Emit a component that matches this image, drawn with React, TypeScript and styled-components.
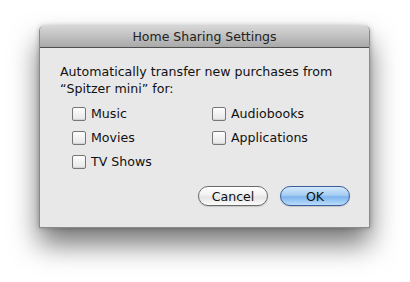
import React from "react";
import styled, { createGlobalStyle } from "styled-components";

const Global = createGlobalStyle`
  html, body { margin: 0; padding: 0; background: #ffffff; }
  body { font-family: "DejaVu Sans", "Noto Sans", sans-serif; }
`;

const Page = styled.div`
  width: 410px;
  height: 282px;
  padding: 26px 0 0 39px;
  box-sizing: border-box;
  background: #fff;
`;

const Window = styled.div`
  width: 331px;
  height: 202px;
  background: #e8e8e8;
  border: 1px solid #8a8a8a;
  border-top: none;
  box-sizing: border-box;
  border-radius: 5px 5px 0 0;
  box-shadow: 0 16px 28px rgba(0, 0, 0, 0.55), 0 0 5px rgba(0, 0, 0, 0.25);
  display: flex;
  flex-direction: column;
`;

const TitleBar = styled.div`
  height: 21px;
  border-radius: 5px 5px 0 0;
  background: linear-gradient(#d6d6d6, #a9a9a9);
  border-bottom: 1px solid #4e4e4e;
  display: flex;
  align-items: center;
  justify-content: center;
  font-size: 12.5px;
  color: #222;
`;

const Body = styled.div`
  flex: 1;
  padding: 15px 19px 0 20px;
  display: flex;
  flex-direction: column;
`;

const Prompt = styled.div`
  font-size: 12.6px;
  line-height: 17px;
  color: #111;
`;

const Grid = styled.div`
  display: grid;
  grid-template-columns: 140px 140px;
  row-gap: 9px;
  margin: 9px 0 0 12px;
`;

const Option = styled.label`
  display: flex;
  align-items: center;
  gap: 5px;
  font-size: 12.6px;
  height: 15px;
  color: #111;
`;

const Box = styled.span`
  width: 12px;
  height: 12px;
  border: 1px solid #777;
  border-radius: 2px;
  background: linear-gradient(#fdfdfd, #e6e6e6);
  box-shadow: inset 0 -1px 1px rgba(0,0,0,0.08);
  flex: none;
`;

const Buttons = styled.div`
  display: flex;
  justify-content: flex-end;
  gap: 12px;
  margin-top: 17px;
`;

const Button = styled.div<{ $primary?: boolean }>`
  width: 70px;
  height: 20px;
  box-sizing: border-box;
  border-radius: 10px;
  display: flex;
  align-items: center;
  justify-content: center;
  font-size: 12.6px;
  color: #111;
  border: 1px solid ${(p) => (p.$primary ? "#3b5d99" : "#6a6a6a")};
  box-shadow: 0 1px 1px rgba(0,0,0,0.15);
  background: ${(p) =>
    p.$primary
      ? "linear-gradient(#d4e8fb 0%, #a6cdf3 45%, #7db4ec 55%, #b9ddfc 100%)"
      : "linear-gradient(#ffffff 0%, #f2f2f2 45%, #e4e4e4 55%, #fbfbfb 100%)"};
`;

export default function App() {
  return (
    <>
      <Global />
      <Page>
        <Window>
          <TitleBar>Home Sharing Settings</TitleBar>
          <Body>
            <Prompt>
              Automatically transfer new purchases from
              <br />
              “Spitzer mini” for:
            </Prompt>
            <Grid>
              <Option><Box />Music</Option>
              <Option><Box />Audiobooks</Option>
              <Option><Box />Movies</Option>
              <Option><Box />Applications</Option>
              <Option><Box />TV Shows</Option>
            </Grid>
            <Buttons>
              <Button>Cancel</Button>
              <Button $primary>OK</Button>
            </Buttons>
          </Body>
        </Window>
      </Page>
    </>
  );
}
